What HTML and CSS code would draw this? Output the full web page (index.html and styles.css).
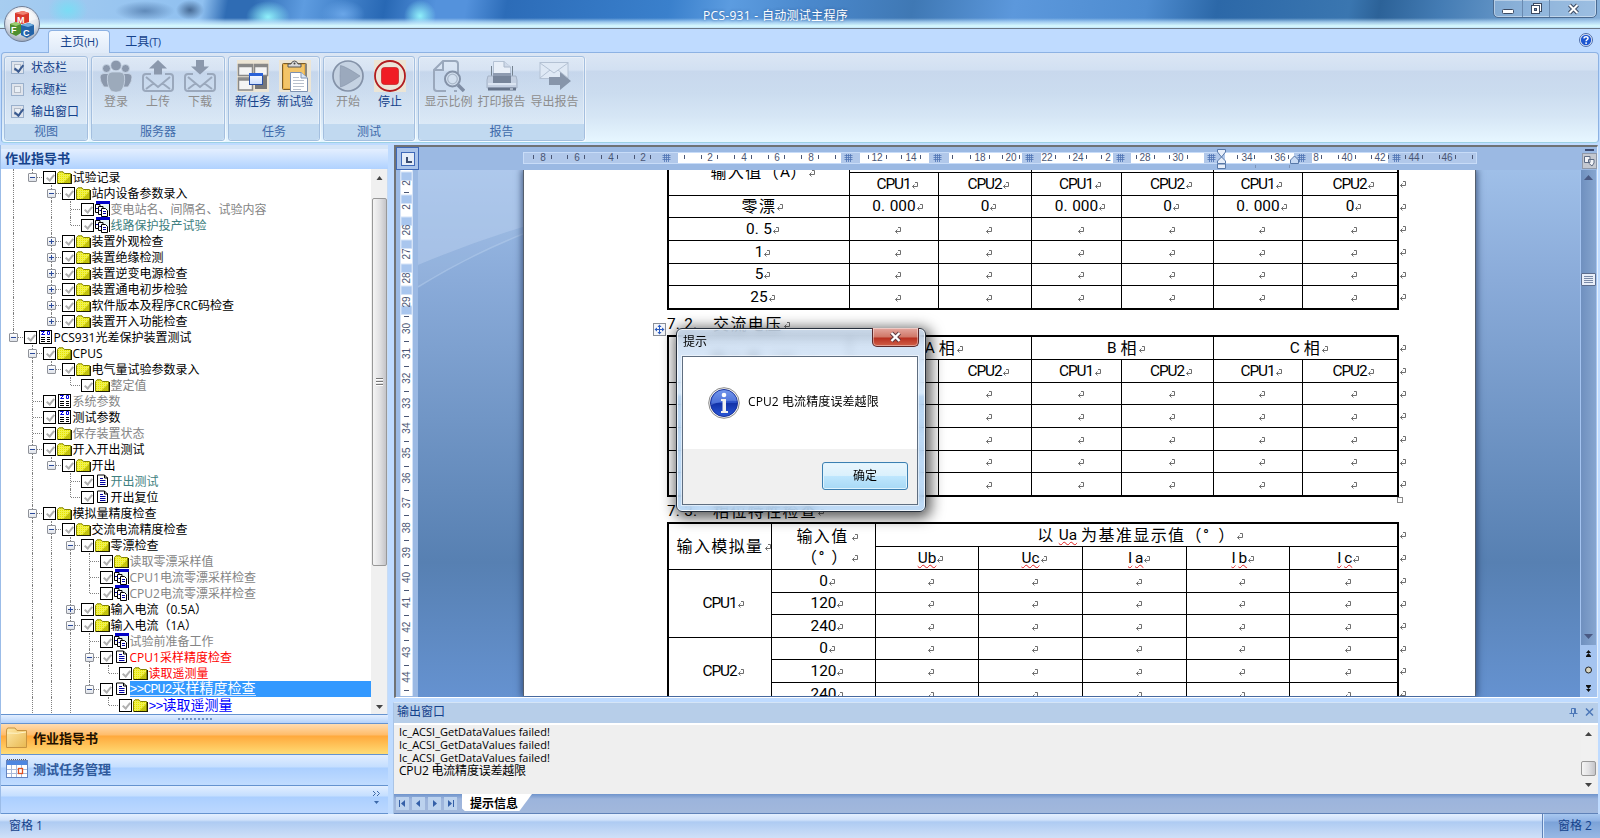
FILE: index.html
```html
<!DOCTYPE html>
<html lang="zh-CN">
<head>
<meta charset="utf-8">
<title>PCS-931 - 自动测试主程序</title>
<link rel="stylesheet" href="styles.css">
</head>
<body>
<svg class="defs" width="0" height="0">
  <defs>
    <pattern id="dither" width="2" height="2" patternUnits="userSpaceOnUse"><rect width="2" height="2" fill="#ffff30"/><rect width="1" height="1" fill="#e0e070"/><rect x="1" y="1" width="1" height="1" fill="#d8d818"/></pattern>
    <linearGradient id="gInfo" x1="0" y1="0" x2="0" y2="1"><stop offset="0" stop-color="#6a8fe8"/><stop offset=".48" stop-color="#2a50c8"/><stop offset=".52" stop-color="#1232a8"/><stop offset="1" stop-color="#2a58d8"/></linearGradient>
    <linearGradient id="gPaper" x1="0" y1="0" x2="1" y2="1"><stop offset="0" stop-color="#ffe9a8"/><stop offset="1" stop-color="#e8b850"/></linearGradient>
    <radialGradient id="gOrb" cx=".5" cy=".3" r=".75"><stop offset="0" stop-color="#fff"/><stop offset=".6" stop-color="#dfe3ea"/><stop offset="1" stop-color="#8f9bb0"/></radialGradient>
    <linearGradient id="gWin" x1="0" y1="0" x2="0" y2="1"><stop offset="0" stop-color="#fff"/><stop offset="1" stop-color="#c8dcff"/></linearGradient>
  </defs>
  <symbol id="ret" viewBox="0 0 8 8"><path d="M4 .5H6.5V4.5H1.5M3.5 2.5L1.5 4.5L3.5 6.5" fill="none" stroke="#6e6e6e"/></symbol>
  <symbol id="folder" viewBox="0 0 15 13"><path d="M.5 12.5V2.5L2 .8H6L7.5 2.5H13.5V12.5Z" fill="url(#dither)" stroke="#848400"/><path d="M6 12L13 5V12Z" fill="#b4b400" opacity=".75"/><path d="M14.5 3V13M1 12.5H15" stroke="#202000" fill="none"/></symbol>
  <symbol id="page" viewBox="0 0 13 14"><path d="M1.5 1H8.5L11.5 4V12.5H1.5Z" fill="#fff" stroke="#000"/><path d="M8.500 1V4H12" fill="none" stroke="#000"/><path d="M4 4.500H7M4 6.500H9.500M4 8.500H9.500M4 10.500H9.500" stroke="#0000a0"/></symbol>
  <symbol id="zd" viewBox="0 0 13 14"><rect x=".5" y=".5" width="12" height="13" fill="#fff" stroke="#000"/><path d="M2 1.500H5.500L2.500 4.500H6M8.500 1.500H10.500V4.500H8.500Z" fill="none" stroke="#0000e0"/><path d="M2 7.500H6M8 7.500H11M2 9.500H6M8 9.500H11M2 11.500H6M8 11.500H11" stroke="#000"/></symbol>
  <symbol id="multi" viewBox="0 0 16 16"><rect x="2" y="0" width="14" height="3" fill="#0000c8"/><path d="M15.500 3V15" stroke="#000"/><rect x="3" y="3" width="12" height="8" fill="#e8f4f4"/><path d="M1.500 3.500H6V11.500H1.500Z" fill="#fff" stroke="#000"/><path d="M4.500 5.500H9V13.500H4.500Z" fill="#fff" stroke="#000"/><path d="M7.500 7.500H11.500L13.500 9.500V15.500H7.500Z" fill="#fff" stroke="#000"/><path d="M9 10.500H12M9 12.500H12M2 7.500H4M5.500 9.500H7" stroke="#0000a0"/></symbol>
</svg>

<header class="titlebar">
  <span class="title">PCS-931 - 自动测试主程序</span>
  <div class="winctl">
    <span class="wc wc-min"><svg width="12" height="6"><rect x=".5" y=".5" width="11" height="4" rx="1" fill="#fff" stroke="#3c4a62"/></svg></span>
    <span class="wc wc-max"><svg width="13" height="13"><rect x="3.500" y="1.500" width="8" height="8" fill="#fff" stroke="#3c4a62"/><rect x="1.500" y="3.500" width="8" height="8" fill="#fff" stroke="#3c4a62"/><rect x="4.500" y="6.500" width="2" height="2" fill="#6c93c4" stroke="#3c4a62"/></svg></span>
    <span class="wc wc-close"><svg width="13" height="12"><path d="M2.500 2L10.500 10M10.500 2L2.500 10" stroke="#3c4a62" stroke-width="4"/><path d="M2.500 2L10.500 10M10.500 2L2.500 10" stroke="#fff" stroke-width="2"/></svg></span>
  </div>
</header>

<nav class="tabs">
  <span class="tab tab-on">主页<i>(H)</i></span>
  <span class="tab">工具<i>(T)</i></span>
  <svg class="help" width="14" height="14" viewBox="0 0 14 14"><circle cx="7" cy="7" r="6.500" fill="#e8eefa" stroke="#4c6ca8"/><circle cx="7" cy="7" r="5.200" fill="#1c56d0"/><path d="M5 5.500C5 3 9.200 3.200 9 5.500C8.900 6.800 7.100 6.800 7.100 8.300" stroke="#fff" stroke-width="1.500" fill="none"/><rect x="6.300" y="9.300" width="1.600" height="1.600" fill="#fff"/></svg>
</nav>

<svg class="orb" width="38" height="38" viewBox="0 0 38 38">
  <circle cx="19" cy="19" r="17.500" fill="url(#gOrb)" stroke="#6f7f98"/>
  <path d="M4 14A16 16 0 0 1 34 14Q19 20 4 14Z" fill="#fff" opacity=".5"/>
  <path d="M12 8L20 6L26 8V17L19 19L12 17Z" fill="#d8382c"/><path d="M12 8L20 6L26 8L20 10Z" fill="#f08070"/>
  <path d="M7 19L13 17L18 19V28L13 31L7 28Z" fill="#4f8f30"/><path d="M7 19L13 17L18 19L13 21Z" fill="#9ccc70"/>
  <path d="M18 20L26 18L31 20V29L24 33L18 30Z" fill="#2464a8"/><path d="M18 20L26 18L31 20L25 22Z" fill="#74b0e0"/>
  <text x="14" y="18" class="cube">M</text><text x="8" y="28" class="cube">F</text><text x="20" y="31" class="cube">C</text>
</svg>

<section class="ribbon">
  <div class="group g-view">
    <div class="checks">
      <label><b class="cb on"></b>状态栏</label>
      <label><b class="cb"></b>标题栏</label>
      <label><b class="cb on"></b>输出窗口</label>
    </div>
    <div class="gname">视图</div>
  </div>
  <div class="group g-server">
    <div class="tools">
      <div class="tool off"><svg width="32" height="32"><g fill="#8b98ac" stroke="#cbd8e8" stroke-width=".8"><circle cx="6.500" cy="8.500" r="4"/><circle cx="25.500" cy="8.500" r="4"/><path d="M0 17Q0 13.500 4 13.500H9V27H4Q0 22 0 17ZM32 17Q32 13.500 28 13.500H23V27H28Q32 22 32 17Z"/><circle cx="16" cy="5.500" r="5.300"/><path d="M7.500 16Q8 12 12 12H20Q24 12 24.500 16Q25.500 25 21 31Q16 33.500 11 31Q6.500 25 7.500 16Z" fill="#9caabb"/></g></svg><span>登录</span></div>
      <div class="tool off"><svg width="32" height="32"><path d="M9 14H4Q1 14 1 17V28Q1 31 4 31H28Q31 31 31 28V17Q31 14 28 14H23M4 17L16 27L28 17M4 29L12 23M28 29L20 23" fill="none" stroke="#9aa8bc" stroke-width="2"/><path d="M16 0L25 8.500H20V14.500H12V8.500H7Z" fill="#8b98ac"/></svg><span>上传</span></div>
      <div class="tool off"><svg width="32" height="32"><path d="M9 14H4Q1 14 1 17V28Q1 31 4 31H28Q31 31 31 28V17Q31 14 28 14H23M4 17L16 27L28 17M4 29L12 23M28 29L20 23" fill="none" stroke="#9aa8bc" stroke-width="2"/><path d="M16 14.500L25 6.500H20V0H12V6.500H7Z" fill="#8b98ac"/></svg><span>下载</span></div>
    </div>
    <div class="gname">服务器</div>
  </div>
  <div class="group g-task">
    <div class="tools">
      <div class="tool"><svg width="32" height="32"><rect width="32" height="32" fill="#ece5d5"/><g fill="#f4f4f4" stroke="#888" stroke-width="1.500"><rect x="1.500" y="4.500" width="14" height="11"/><rect x="17.500" y="4.500" width="13" height="11"/><rect x="1.500" y="18" width="14" height="12"/></g><path d="M2 6H15M18 6H30M2 19.500H15" stroke="#888" stroke-width="2.500"/><path d="M28 16V27H18" stroke="#777" stroke-width="4" fill="none"/><rect x="12.500" y="13.500" width="13" height="11" fill="url(#gWin)" stroke="#2850a8"/><rect x="12" y="13" width="14" height="3" fill="#2a62d8"/></svg><span>新任务</span></div>
      <div class="tool"><svg width="32" height="32"><rect width="32" height="32" fill="#ece5d5"/><rect x="3.500" y="3.500" width="24" height="26" rx="1" fill="#e8b04a" stroke="#7a5c28"/><rect x="5" y="5" width="20" height="23" fill="#f3c468"/><path d="M27 4V30" stroke="#8a857a" stroke-width="2"/><path d="M9 7V4H12Q13 1 15.500 1Q18 1 19 4H22V7Z" fill="#d8d8d8" stroke="#555"/><circle cx="15.500" cy="3.500" r="1" fill="#444"/><path d="M11.500 12.500H22L28.500 18V31.500H11.500Z" fill="#fff" stroke="#7c90b0"/><path d="M22 12.500V18H28.500" fill="#dce6f4" stroke="#7c90b0"/><path d="M14 17.500H20M14 20.500H25M14 23.500H25M14 26.500H25M14 29.500H22" stroke="#b8c0cc"/></svg><span>新试验</span></div>
    </div>
    <div class="gname">任务</div>
  </div>
  <div class="group g-test">
    <div class="tools">
      <div class="tool off"><svg width="32" height="32"><circle cx="16" cy="16" r="15" fill="#c5d2e2" stroke="#8492a8" stroke-width="1.700"/><path d="M8.500 5.500Q14 6.500 28 16Q14 25.500 8.500 27Q7.500 16 8.500 5.500Z" fill="#9ba9bd" stroke="#8492a8" stroke-width=".6"/></svg><span>开始</span></div>
      <div class="tool"><svg width="32" height="32"><rect width="32" height="32" fill="#ece5d5"/><circle cx="16" cy="16" r="15" fill="#ece4d8" stroke="#b01c20" stroke-width="1.800"/><rect x="7.500" y="7.500" width="17" height="17" rx="3" fill="#f01c24" stroke="#c01c20" stroke-width=".7"/></svg><span>停止</span></div>
    </div>
    <div class="gname">测试</div>
  </div>
  <div class="group g-report">
    <div class="tools">
      <div class="tool off"><svg width="32" height="32"><path d="M10 1H22Q25 1 25 4V13M13 31H4Q1 31 1 28V10L10 1V10H1" fill="none" stroke="#9aa8bc" stroke-width="2"/><path d="M24 31H21" stroke="#9aa8bc" stroke-width="2"/><circle cx="19.500" cy="19" r="7.500" fill="#d3e0f0" stroke="#8492a8" stroke-width="2"/><circle cx="19.500" cy="19" r="4.800" fill="none" stroke="#aab8ca" stroke-width="1.300"/><path d="M25 25L31 31" stroke="#7f8da4" stroke-width="3.500"/></svg><span>显示比例</span></div>
      <div class="tool off"><svg width="32" height="32"><path d="M7.500 17V1.500H18L24.500 7V17Z" fill="#e8eff8" stroke="#b4c2d4"/><path d="M18 1.500V7H24.500" fill="#cfdaea" stroke="#aab8ca"/><path d="M5.500 6V17M26.500 6V17" stroke="#74828f"/><path d="M2 16H30L31 20V28H1V20Z" fill="#c4d0e2" stroke="#a4b2c6"/><path d="M7 13H25V24H7Z" fill="#77859a"/><path d="M7 13H25V16H7Z" fill="#8e9bb0"/><rect x="2" y="23" width="28" height="2" fill="#dbe5f2"/><rect x="2" y="27.500" width="28" height="3" fill="#66748a"/><rect x="24" y="28" width="3" height="2" fill="#a8b4c6"/></svg><span>打印报告</span></div>
      <div class="tool off"><svg width="32" height="32"><rect x="1" y="2.500" width="28" height="16" fill="#dfe9f5" stroke="#b4c2d4"/><path d="M1 3L15 13L29 3M1 18L11 10M29 18L19 10" fill="none" stroke="#b4c2d4"/><path d="M10 17H21V12L32 21L21 30V25H10Z" fill="#8795aa"/></svg><span>导出报告</span></div>
    </div>
    <div class="gname">报告</div>
  </div>
</section>

<main class="work">
  <aside class="side">
    <div class="side-head">作业指导书</div>
    <div class="tree-wrap">
      <div class="tree" id="tree"></div>
      <div class="sb">
        <svg width="15" height="29"><path d="M4.500 11L7.500 7L10.500 11Z" fill="#444"/></svg>
        <div class="sb-thumb tree-thumb"><i></i><i></i><i></i></div>
        <svg class="sb-end" width="15" height="15"><path d="M4 6H11L7.500 10Z" fill="#444"/></svg>
      </div>
    </div>
    <div class="splitter"><i></i><i></i><i></i><i></i><i></i><i></i><i></i><i></i><i></i></div>
    <div class="navbtn active"><svg width="22" height="22"><path d="M.500 4V20.500H20.500V3.500H11L9 1H2Q.500 1 .500 4Z" fill="url(#gPaper)" stroke="#c89440"/><path d="M1 6Q12 7 20 5" stroke="#fff4c8" fill="none"/></svg><span>作业指导书</span></div>
    <div class="navbtn"><svg width="22" height="22"><rect x=".500" y="2.500" width="21" height="17" fill="#fff" stroke="#6484c0"/><rect x="1" y="3" width="20" height="4" fill="#4e86e0"/><path d="M1 1.500H21" stroke="#555" stroke-dasharray="1 1"/><path d="M5.500 7V19M10.500 7V19M15.500 7V19M1 11.500H21M1 15.500H21" stroke="#a8b8d8"/><rect x="12.500" y="10.500" width="4" height="5" fill="#fff" stroke="#e05020" stroke-width="1.300"/></svg><span>测试任务管理</span></div>
    <div class="navrest"><svg width="9" height="18"><path d="M1 2L3.500 4.500L1 7M5 2L7.500 4.500L5 7" fill="none" stroke="#3c68a8"/><path d="M2 12H7L4.500 15Z" fill="#3c68a8"/></svg></div>
  </aside>

  <section class="right">
    <div class="doc">
      <div class="ruler-row">
        <span class="corner"><svg width="14" height="14"><rect x=".500" y=".500" width="13" height="13" fill="#e4ecf8" stroke="#3f69b8"/><path d="M6 5V10H11" stroke="#3a4c70" stroke-width="2" fill="none"/></svg></span>
        <svg id="hruler" width="1160" height="22"></svg>
        <span class="viewbtn"><i></i><svg width="15" height="16"><rect x=".500" y=".500" width="14" height="15" fill="#c4c8d0" stroke="#8f98a8"/><path d="M2.500 3.500H8V9.500H2.500ZM6.500 6.500H12V10L10 13L6.500 10Z" fill="#f2f4f8" stroke="#5f6c84"/></svg></span>
      </div>
      <div class="doc-row">
        <svg id="vruler" width="22" height="526"></svg>
        <div class="desk">
          <svg class="arc" width="105" height="130"><path d="M0 0H105V57Q50 74 0 95Z" fill="#b9d0ee" opacity=".55"/><path d="M0 95Q50 74 105 57V64Q50 86 0 117Z" fill="#b9d0ee" opacity=".15"/><path d="M0 117Q50 86 105 64" stroke="#b8cfee" fill="none" stroke-width="1.500" opacity=".5"/></svg>
          <div class="page">
            <div class="tblrow t1"><div class="grid g1" id="t1"></div><div class="marks" id="m1"></div></div>
            <h2 class="hd"><em class="en">7<i class="dot">.</i>2<i class="dot">.</i></em><span>交流电压</span><svg class="ret"><use href="#ret"/></svg></h2>
            <div class="tblrow"><div class="grid g2" id="t2"></div><div class="marks" id="m2"></div></div>
            <h2 class="hd"><em class="en">7<i class="dot">.</i>3<i class="dot">.</i></em><span>相位特性检查</span><svg class="ret"><use href="#ret"/></svg></h2>
            <div class="tblrow"><div class="grid g3" id="t3"></div><div class="marks" id="m3"></div></div>
            <svg class="mover" width="13" height="13"><rect x=".500" y=".500" width="12" height="12" fill="#f4f6fa" stroke="#8a8f98"/><path d="M6.500 2.500V10.500M2.500 6.500H10.500" stroke="#2c5cc0"/><path d="M6.500 1.500L4.500 4H8.500ZM6.500 11.500L4.500 9H8.500ZM1.500 6.500L4 4.500V8.500ZM11.500 6.500L9 4.500V8.500Z" fill="#2c5cc0"/></svg>
            <i class="sizer"></i>
          </div>
        </div>
        <div class="wsb">
          <div class="wtrack">
            <svg width="15" height="16"><path d="M3 10H12L7.500 5Z" fill="#4a5a84"/></svg>
            <div class="wthumb"><i></i><i></i><i></i><i></i></div>
            <svg class="sb-end" width="15" height="16"><path d="M3 5H12L7.500 10Z" fill="#4a5a84"/></svg>
          </div>
          <svg width="16" height="51"><g fill="#111"><path d="M5 8L7.500 5L10 8ZM5 11L7.500 8L10 11ZM5 41L7.500 44L10 41ZM5 44L7.500 47L10 44Z"/><path d="M5 11H10V12H5ZM5 40H10V41H5Z"/></g><circle cx="7.500" cy="25" r="3" fill="#d8d4c0" stroke="#222"/></svg>
        </div>
      </div>
    </div>

    <div class="output">
      <div class="out-head"><span>输出窗口</span>
        <svg width="25" height="10"><path d="M2.500 6V1.500H6.500V6M.500 6.500H8.500M4.500 7V10M5.500 1V6" stroke="#4d78b8" fill="none"/><path d="M17 1.500L24 8.500M24 1.500L17 8.500" stroke="#4d78b8" stroke-width="1.500"/></svg>
      </div>
      <div class="out-body">
        <div class="log"><p>Ic_ACSI_GetDataValues failed!</p><p>Ic_ACSI_GetDataValues failed!</p><p>Ic_ACSI_GetDataValues failed!</p><p class="cn">CPU2 电流精度误差越限</p></div>
        <div class="sb osb">
          <svg width="15" height="36"><path d="M4 11L7.500 7L11 11Z" fill="#444"/></svg>
          <div class="sb-thumb othumb"></div>
          <svg class="sb-end" width="15" height="16"><path d="M4 5H11L7.500 9Z" fill="#444"/></svg>
        </div>
      </div>
      <div class="out-tabs">
        <b><svg width="13" height="13"><path d="M3.500 3V10" stroke="#3560a8"/><path d="M9 3V10L5 6.500Z" fill="#3560a8"/></svg></b>
        <b><svg width="13" height="13"><path d="M8 3V10L4 6.500Z" fill="#3560a8"/></svg></b>
        <b><svg width="13" height="13"><path d="M5 3V10L9 6.500Z" fill="#3560a8"/></svg></b>
        <b><svg width="13" height="13"><path d="M9.500 3V10" stroke="#3560a8"/><path d="M4 3V10L8 6.500Z" fill="#3560a8"/></svg></b>
        <span class="otab">提示信息</span>
      </div>
    </div>
  </section>
</main>

<footer class="status"><span class="st-left">窗格 1</span><span class="st-right">窗格 2</span></footer>

<div class="dialog">
  <div class="dlg-title"><span>提示</span><span class="dlg-x"><svg width="13" height="12"><path d="M2.500 2L10.500 10M10.500 2L2.500 10" stroke="#5c3a40" stroke-width="4.200"/><path d="M2.500 2L10.500 10M10.500 2L2.500 10" stroke="#fff" stroke-width="2.400"/></svg></span></div>
  <div class="dlg-body">
    <div class="dlg-msg">
      <svg width="32" height="32"><circle cx="16" cy="16" r="15.300" fill="#f4f4f4" stroke="#8c8c8c"/><circle cx="16" cy="16" r="13.500" fill="url(#gInfo)" stroke="#16309a"/><path d="M3 18Q4 4 16 3Q27 4 29 14Q16 13 3 18Z" fill="#7ea0f0" opacity=".45"/><circle cx="16" cy="8" r="2.300" fill="#fff"/><path d="M13 12H18V24H20V26H13V24H14.500V14H13Z" fill="#f0f0f0"/></svg>
      <span>CPU2 电流精度误差越限</span>
    </div>
    <div class="dlg-foot"><button class="ok">确定</button></div>
  </div>
</div>
<script src="app.js"></script>
</body>
</html>
```
FILE: styles.css
```css
* { box-sizing: border-box; }
html, body { margin: 0; padding: 0; }
body { width: 1600px; height: 838px; overflow: hidden; display: flex; flex-direction: column; background: #bfdbff; font: 12px/16px "Open Sans", "Noto Sans CJK SC", sans-serif; color: #000; position: relative; }
svg { display: block; flex: none; }
i, em { font-style: normal; }
p, h2 { margin: 0; }
.defs { position: absolute; }

/* title bar */
.titlebar { height: 29px; flex: none; position: relative; border-bottom: 1px solid #6b7887; display: flex; justify-content: center;
  background:
    linear-gradient(to bottom, transparent 18px, rgba(190,225,250,.75) 22px, #d8fbff 26px, #c4e4fa 28px),
    radial-gradient(ellipse 22px 16px at 268px 17px, #8ff0fa, transparent),
    radial-gradient(ellipse 22px 14px at 343px 14px, #6aa6e8, transparent),
    radial-gradient(ellipse 16px 16px at 420px 16px, #8ff0fa, transparent),
    radial-gradient(ellipse 14px 10px at 190px 10px, rgba(40,70,110,.7), transparent),
    radial-gradient(ellipse 30px 10px at 145px 11px, rgba(60,100,150,.6), transparent),
    radial-gradient(ellipse 20px 16px at 68px 10px, #7adcf4, transparent),
    linear-gradient(100deg, #a7cdf0 0, #8fc0f0 200px, #2f6cb4 225px, #2f6cb4 250px, #5e9ce0 300px, #2868b4 380px, #5492dc 430px, #5492dc 460px, #2c6cb8 500px, #3a80cc 660px, #5c9ce0 720px, #4a88cc 800px, #3f78b4 900px, #5c98dc 1000px, #4e8cd0 1130px, #2c68a8 1200px, #3a76b0 1330px, #2c6298 1360px, #447cb4 1420px, #74a2d0 1520px, #8cb4dc 1600px); }
.title { width: 148px; margin-left: -46px; color: #fff; padding-top: 8px; line-height: 16px; letter-spacing: .3px; white-space: nowrap; text-shadow: 0 0 3px rgba(20,60,120,.6); }
.winctl { position: absolute; right: 3px; top: -1px; display: flex; height: 19px; border: 1px solid #4a6a90; border-radius: 0 0 5px 5px; background: rgba(200,222,244,.35); box-shadow: inset 0 0 0 1px rgba(255,255,255,.4); }
.wc { display: flex; align-items: center; justify-content: center; border-left: 1px solid #6a8ab0; }
.wc-min { width: 28px; border-left: 0; padding-top: 6px; }
.wc-max { width: 27px; }
.wc-close { width: 47px; }

/* ribbon tabs */
.tabs { height: 23px; flex: none; display: flex; align-items: flex-end; padding-left: 48px; position: relative; color: #15428b; }
.tab { width: 62px; height: 22px; line-height: 23px; text-align: center; }
.tab + .tab { width: 66px; }
.tab i { font-size: 11px; letter-spacing: -.3px; }
.tab-on { background: linear-gradient(#f4f9ff, #dfeaf8); border: 1px solid #8db2e3; border-bottom: 0; border-radius: 4px 4px 0 0; height: 23px; line-height: 22px; position: relative; z-index: 2; margin-bottom: -1px; }
.help { margin-left: auto; margin-right: 7px; margin-bottom: 5px; }
.orb { position: absolute; left: 3px; top: 5px; z-index: 5; }
.cube { font: bold 9px "Liberation Sans", sans-serif; fill: #fff; }

/* ribbon */
.ribbon { height: 91px; flex: none; margin: 0 1px 2px; border: 1px solid #8db2e3; border-bottom-color: #9bd0e4; border-radius: 4px; padding: 3px 2px; display: flex; gap: 3px; background: linear-gradient(#dbe6f4 0, #d2e0f2 17px, #c8d8ed 18px, #cbdcef 40px, #d6e6f5 64px, #e6f6ff 88px); }
.group { height: 85px; border: 1px solid #a4bfdf; border-radius: 3px; display: flex; flex-direction: column; justify-content: space-between; box-shadow: inset 0 0 0 1px rgba(255,255,255,.35), 1px 1px 0 rgba(255,255,255,.6); background: linear-gradient(rgba(255,255,255,.15) 0, rgba(255,255,255,.1) 14px, rgba(190,208,232,.25) 15px, rgba(220,232,245,.5) 67px); }
.g-view { width: 84px; } .g-server { width: 134px; } .g-task { width: 92px; } .g-test { width: 92px; } .g-report { width: 167px; }
.gname { height: 16px; line-height: 15px; text-align: center; color: #3e6aaa; background: #c1d9f0; border-radius: 0 0 3px 3px; }
.checks { padding: 3px 0 0 6px; display: flex; flex-direction: column; gap: 6px; color: #15428b; }
.checks label { display: flex; align-items: center; gap: 7px; height: 16px; }
.cb { width: 13px; height: 13px; margin-bottom: 1px; border: 1px solid #9ab0cc; background: #e9eff6; box-shadow: inset 0 0 0 2px #dfe4ec, inset 0 0 0 3px #b4bcc8; position: relative; }
.cb.on::after { content: ""; position: absolute; left: 4px; top: 1px; width: 4px; height: 7px; border: solid #3a5a90; border-width: 0 2px 2px 0; transform: rotate(38deg); }
.tools { display: flex; justify-content: center; padding-top: 3px; }
.tool { width: 42px; display: flex; flex-direction: column; align-items: center; gap: 2px; color: #15428b; white-space: nowrap; }
.g-report .tool { width: 53px; }
.tool.off { color: #8d8d8d; }

/* workspace */
.work { flex: 1; display: flex; gap: 5px; min-height: 0; }
.side { width: 388px; border-left: 1px solid #9bbce8; display: flex; flex-direction: column; }
.side-head { height: 24px; border-top: 4px solid #d5e5f7; padding-left: 4px; font-weight: bold; font-size: 13px; line-height: 19px; color: #15428b; background: linear-gradient(#e4efff, #b0d2ff); }
.tree-wrap { height: 546px; display: flex; background: #fff; border-bottom: 1px solid #6593cf; border-right: 1px solid #c8dcf4; }
.tree { width: 370px; height: 545px; overflow: hidden; }
.row { height: 16px; display: flex; align-items: center; padding-left: 3px; line-height: 16px; white-space: nowrap; }
.gd { width: 19px; height: 16px; flex: none; position: relative; }
.gd.v::before, .gd.e::before { content: ""; position: absolute; left: 9px; top: 0; height: 16px; border-left: 1px dotted #808080; }
.gd.e::before { height: 8px; }
.gd.h::after { content: ""; position: absolute; left: 10px; top: 8px; width: 9px; border-top: 1px dotted #808080; }
.pm { position: absolute; z-index: 1; left: 5px; top: 4px; width: 9px; height: 9px; border: 1px solid #8f9299; border-radius: 1px; background: linear-gradient(#fff, #dfe3ea); }
.pm::before { content: ""; position: absolute; left: 1px; top: 3px; width: 5px; height: 1px; background: #2b4a9b; }
.pm.plus::after { content: ""; position: absolute; left: 3px; top: 1px; width: 1px; height: 5px; background: #2b4a9b; }
.ck { width: 13px; height: 13px; flex: none; margin: 1px 0 0 1px; border: 1px solid #000; background: #fff; position: relative; }
.ck::after { content: ""; position: absolute; left: 4px; top: 1px; width: 3px; height: 6px; border: solid #b0b0b0; border-width: 0 2px 2px 0; transform: rotate(40deg); }
.ico { width: 17px; display: flex; justify-content: center; flex: none; }
.ico .ic-multi { margin-right: 2px; }
.tx { flex: none; padding-top: 2px; margin-left: -.500px; }
.gray { color: #848484; } .teal { color: #408080; } .red { color: #f00; }
.sel, .blue { font: 14px/16px "Liberation Mono", "Noto Sans CJK SC", monospace; }
.sel u, .blue u { font-size: 13px; letter-spacing: -.8px; text-decoration: none; }
.sel { background: #3399ff; color: #fff; flex: 1; height: 16px; padding-top: 0; }
.sel span { border-bottom: 1px solid #cfe4ff; display: inline-block; height: 15px; line-height: 16px; }
.blue { color: #00f; }
.sb { width: 16px; background: #f0f0f0; display: flex; flex-direction: column; align-items: center; }
.sb-thumb { width: 15px; border: 1px solid #989898; border-radius: 2px; background: linear-gradient(90deg, #f5f5f5, #e2e2e4 50%, #c4c4c8); display: flex; flex-direction: column; align-items: center; justify-content: center; gap: 1px; }
.sb-thumb i { width: 7px; height: 2px; background: #777; border-bottom: 1px solid #fff; }
.tree-thumb { height: 368px; }
.sb-end { margin-top: auto; }
.splitter { height: 8px; display: flex; align-items: center; justify-content: center; gap: 2px; background: linear-gradient(#e4efff, #b4d2fa); }
.splitter i { width: 2px; height: 2px; background: #6f93c8; }
.navbtn { height: 31px; border-top: 1px solid #6593cf; padding-left: 5px; display: flex; align-items: center; gap: 5px; font-weight: bold; font-size: 13px; color: #2f5a9c; background: linear-gradient(#e2eeff, #c4deff 12px, #abcfff 13px, #c1dcff); }
.navbtn svg { margin-bottom: 2px; }
.navbtn span { padding-bottom: 3px; }
.navbtn.active { color: #201000; background: linear-gradient(#ffdcb0, #ffbc69 11px, #ffa93c 12px, #ffdc75); }
.navrest { flex: 1; border-top: 1px solid #6593cf; border-bottom: 1px solid #6593cf; display: flex; justify-content: flex-end; padding: 3px 7px 0 0; background: linear-gradient(#e2eeff, #c4deff 10px, #abcfff 11px, #bcd8ff); }

.right { flex: 1; display: flex; flex-direction: column; min-width: 0; padding-left: 1px; }
.doc { height: 553px; flex: none; border: 2px solid #6f7275; border-width: 2px 1px 0 2px; border-right-color: #e4eefa; border-bottom: 1px solid #fff; display: flex; flex-direction: column; background: #9bb9e3; width: 1204px; }
.ruler-row { height: 23px; flex: none; display: flex; }
.corner { width: 23px; height: 23px; border: 1px solid #3f69b8; display: flex; align-items: center; justify-content: center; background: #a9c3ea; }
.viewbtn { margin-left: auto; margin-right: 0; padding-top: 2px; display: flex; flex-direction: column; align-items: center; gap: 2px; }
.viewbtn i { width: 9px; height: 2px; background: #3c4a70; }
.doc-row { flex: 1; display: flex; min-height: 0; }
.rt { font: 10px "Liberation Sans", sans-serif; fill: #4a5674; text-anchor: middle; }
.desk { flex: 1; overflow: hidden; position: relative; padding-left: 105px; background: linear-gradient(#9fbfe8 0, #8aabd9 110px, #5780b2 392px, #6592d0 526px); }
.arc { position: absolute; left: 0; top: 0; }
.page { width: 953px; height: 526px; overflow: hidden; position: relative; background: #fff; border: 1px solid #56606e; border-width: 0 1px; padding-left: 143px; box-shadow: 0 0 7px 1px rgba(30,50,90,.75); font: 16px/21px Roboto, "Noto Sans CJK SC", sans-serif; }
.tblrow { display: flex; }
.t1 { margin-top: -23px; }
.grid { width: 732px; flex: none; border: 2px solid #000; display: grid; gap: 1px; background: #000; }
.g1, .g2 { grid-template-columns: 180px 88px 92px 89px 91px 88px 94px; }
.g1 { grid-template-rows: 23px 22px 21px 22px 22px 21px 22px; }
.g2 { grid-template-rows: 22px 22px 21px 22px 22px 21px 22px; }
.g3 { grid-template-columns: 102px 103px 102px 103px 103px 102px 107px; grid-template-rows: 22px 22px 22px 21px 22px 21px 22px 22px; border-bottom: 0; }
.cell { background: #fff; display: flex; align-items: center; justify-content: center; text-align: center; white-space: nowrap; padding: 1px 0 0 8px; }
.cell b, .en { font: 15.400px/18px Roboto, "Liberation Sans", sans-serif; margin-bottom: 2px; }
.cell b.word { letter-spacing: -1.100px; margin-right: 1px; }
.dot { letter-spacing: 4.600px; }
.nar { padding: 0 2.800px 0 2.500px; }
.cell s, .hd span { text-decoration: none; letter-spacing: 1.400px; line-height: 20px; }
.cell .sq { text-decoration: underline wavy #e02020 1px; text-underline-offset: 1px; text-decoration-skip-ink: none; }
.ret { width: 8px; height: 8px; display: inline-block; margin-top: 2px; flex: none; }
.cell .two { display: flex; flex-direction: column; align-items: flex-end; line-height: 21px; }
.cell .two div { display: flex; align-items: center; gap: 2px; height: 21px; }
.sp { width: 4px; flex: none; }
.deg { width: 8px; flex: none; }
.marks { display: flex; flex-direction: column; padding-top: 2px; gap: 1px; }
.marks div { display: flex; align-items: center; }
.hd { height: 25px; display: flex; align-items: center; font: inherit; padding-top: 5px; }
.hd em { width: 46px; }
.mover { position: absolute; left: 129px; top: 153px; }
.sizer { position: absolute; left: 873px; top: 327px; width: 6px; height: 6px; border: 1px solid #888; background: #fff; }
.wsb { width: 17px; background: #a5c4f0; display: flex; flex-direction: column; align-items: center; }
.wtrack { width: 15px; height: 475px; background: linear-gradient(90deg, #6f90bf, #86a5cf); display: flex; flex-direction: column; }
.wthumb { margin-top: 87px; height: 13px; border: 1px solid #5c6c8c; border-radius: 1px; background: #e8eef8; display: flex; flex-direction: column; align-items: center; justify-content: center; gap: 1px; }
.wthumb i { width: 9px; height: 1px; background: #7a8aa8; }

/* output window */
.output { margin-top: 4px; flex: 1; display: flex; flex-direction: column; width: 1205px; margin-left: -1px; border-left: 1px solid #a9c4e6; border-top: 1px solid #d5e5f7; }
.out-head { height: 20px; background: #b7cee9; color: #15428b; padding: 0 4px 2px 3px; display: flex; align-items: center; justify-content: space-between; }
.out-body { height: 71px; border-top: 2px solid #fff; background: #efefef; display: flex; justify-content: space-between; padding-right: 2px; }
.log { padding: 0 0 0 5px; }
.log p { height: 13px; line-height: 13px; font-size: 11px; white-space: nowrap; }
.log .cn { font-size: 12px; letter-spacing: -.200px; line-height: 13px; }
.osb { width: 15px; }
.othumb { height: 15px; flex: none; }
.out-tabs { flex: 1; display: flex; padding: 3px 0 0 2px; gap: 3px; background: linear-gradient(#6f94cc, #9cb4dc 5px, #a2b8dc); border-bottom: 1px solid #5f82b8; }
.out-tabs b { width: 13px; height: 13px; background: #bcd2ee; }
.otab { margin: -3px 0 0 2px; width: 70px; height: 17px; line-height: 19px; padding-left: 8px; font-weight: bold; background: #fff; clip-path: polygon(0 0, 100% 0, 82% 100%, 4% 100%, 0 85%); }

/* status bar */
.status { height: 24px; flex: none; display: flex; justify-content: space-between; color: #15428b; line-height: 24px; background: linear-gradient(#e4f0ff 0, #cfe1fa 6px, #aecbf2 8px, #cfe0f8 24px); }
.st-left { padding-left: 9px; }
.st-right { width: 58px; padding-left: 15px; border-left: 1px solid #5f82b8; background: linear-gradient(#a8c8f0, #8fb2e4 7px, #7ba2d8 8px, #98b8e4); box-shadow: inset 1px 0 0 #d8e8fc; }

/* message box */
.dialog { position: absolute; left: 676px; top: 328px; width: 250px; height: 184px; border: 1px solid #27303c; border-radius: 6px; padding: 0 7px 6px 5px; box-shadow: inset 0 0 0 1px rgba(255,255,255,.75), 2px 3px 14px 3px rgba(0,0,0,.65); background: linear-gradient(rgba(185,205,228,.72), rgba(208,228,250,.8) 34px, rgba(205,228,250,.8) 64px, rgba(168,204,240,.78) 68px, rgba(176,210,244,.82)); backdrop-filter: blur(4px); }
.dlg-title { height: 27px; display: flex; justify-content: space-between; padding-left: 1px; line-height: 26px; }
.dlg-x { width: 47px; height: 19px; margin: -1px -1px 0 0; border: 1px solid #5b2a2c; border-top: 0; border-radius: 0 0 5px 5px; background: linear-gradient(#e4a8a0, #d07868 9px, #b83020 10px, #d06048); display: flex; align-items: center; justify-content: center; box-shadow: inset 0 0 0 1px rgba(255,255,255,.4); }
.dlg-body { height: 149px; border: 1px solid #5f6e80; background: #f0f0f0; outline: 1px solid rgba(255,255,255,.5); }
.dlg-msg { height: 92px; background: #fff; display: flex; align-items: center; gap: 8px; padding-left: 25px; }
.dlg-msg span { margin-top: -3px; letter-spacing: .1px; }
.dlg-foot { display: flex; justify-content: flex-end; padding: 13px 9px 0 0; }
.ok { width: 86px; height: 28px; border: 1px solid #3c7fb1; border-radius: 3px; padding: 0; font: inherit; color: #000; background: linear-gradient(#eaf6fd, #d9f0fc 50%, #bee6fd 51%, #a7d9f5); box-shadow: inset 0 0 0 1px #dff4fe; }
```
FILE: app.js
```js
// [level, state, icon, text, colour class]; state: '-' open, '+' closed, '' leaf
const rows = [
  [1, '-', 'folder', '试验记录'],
  [2, '-', 'folder', '站内设备参数录入'],
  [3, '', 'multi', '变电站名、间隔名、试验内容', 'gray'],
  [3, '', 'multi', '线路保护投产试验', 'teal'],
  [2, '+', 'folder', '装置外观检查'],
  [2, '+', 'folder', '装置绝缘检测'],
  [2, '+', 'folder', '装置逆变电源检查'],
  [2, '+', 'folder', '装置通电初步检验'],
  [2, '+', 'folder', '软件版本及程序CRC码检查'],
  [2, '+', 'folder', '装置开入功能检查'],
  [0, '-', 'zd', 'PCS931光差保护装置测试'],
  [1, '-', 'folder', 'CPUS'],
  [2, '-', 'folder', '电气量试验参数录入'],
  [3, '', 'folder', '整定值', 'gray'],
  [1, '', 'zd', '系统参数', 'gray'],
  [1, '', 'zd', '测试参数'],
  [1, '', 'folder', '保存装置状态', 'gray'],
  [1, '-', 'folder', '开入开出测试'],
  [2, '-', 'folder', '开出'],
  [3, '', 'page', '开出测试', 'teal'],
  [3, '', 'page', '开出复位'],
  [1, '-', 'folder', '模拟量精度检查'],
  [2, '-', 'folder', '交流电流精度检查'],
  [3, '-', 'folder', '零漂检查'],
  [4, '', 'folder', '读取零漂采样值', 'gray'],
  [4, '', 'multi', 'CPU1电流零漂采样检查', 'gray'],
  [4, '', 'multi', 'CPU2电流零漂采样检查', 'gray'],
  [3, '+', 'folder', '输入电流（0.5A）'],
  [3, '-', 'folder', '输入电流（1A）'],
  [4, '', 'multi', '试验前准备工作', 'gray'],
  [4, '-', 'page', 'CPU1采样精度检查', 'red'],
  [5, '', 'folder', '读取遥测量', 'red'],
  [4, '-', 'page', '<span><u>&gt;&gt;CPU2</u>采样精度检查</span>', 'sel'],
  [5, '', 'folder', '<u>&gt;&gt;</u>读取遥测量', 'blue']
];
const iconSize = { folder: [15, 13], page: [13, 14], zd: [13, 14], multi: [16, 16] };
// levels of the branches that go on below the visible part
const levels = rows.map(r => r[0]).concat([3, 2, 1]);
const goesOn = (i, d) => {
  for (let k = i + 1; k < levels.length; k++) {
    if (levels[k] === d) return true;
    if (levels[k] < d) return false;
  }
  return false;
};
document.getElementById('tree').innerHTML = rows.map(([lv, st, ic, tx, cl], i) => {
  let g = '';
  for (let d = 0; d < lv; d++) g += `<i class="gd${goesOn(i, d) ? ' v' : ''}"></i>`;
  const pm = st ? `<i class="pm${st === '+' ? ' plus' : ''}"></i>` : '';
  g += `<i class="gd h ${goesOn(i, lv) ? 'v' : 'e'}">${pm}</i>`;
  const [w, h] = iconSize[ic];
  return `<div class="row">${g}<i class="ck"></i><i class="ico"><svg class="ic-${ic}" width="${w}" height="${h}"><use href="#${ic}"/></svg></i><span class="tx ${cl || ''}">${tx}</span></div>`;
}).join('');

// document tables
const RET = '<svg class="ret"><use href="#ret"/></svg>';
const cell = (html = '', span = '') => `<div class="cell"${span ? ` style="grid-area:${span}"` : ''}>${html}${RET}</div>`;
// half-width glyphs share one advance, so narrow ones get extra room
const half = t => t.replace('.', '<i class="dot">.</i>').replace('I', '<i class="nar">I</i>');
const en = t => `<b${/^CPU/.test(t) ? ' class="word"' : ''}>${half(t)}</b>`;
const cn = t => `<s>${t}</s>`;
const SP = '<i class="sp"></i>';
const DEG = cn('（°') + '<i class="deg"></i>' + cn('）');
const cpuRow = [1, 2, 1, 2, 1, 2].map(n => cell(en('CPU' + n))).join('');
const phases = r => ['A', 'B', 'C'].map((p, i) => cell(en(p) + SP + cn('相'), `${r} / ${2 + i * 2} / span 1 / span 2`)).join('');
const empties = n => Array(n).fill(cell()).join('');
const head = cell(cn('输入值（') + en('A') + cn('）'), '1 / 1 / span 2 / span 1') + phases(1) + cpuRow;
document.getElementById('t1').innerHTML = head +
  cell(cn('零漂')) + ['0.000', '0', '0.000', '0', '0.000', '0'].map(t => cell(en(t))).join('') +
  ['0.5', '1', '5', '25'].map(t => cell(en(t)) + empties(6)).join('');
document.getElementById('t2').innerHTML = head +
  ['0.5', '1', '10', '30', '60'].map(t => cell(en(t)) + empties(6)).join('');
const sq = t => `<b class="sq">${half(t)}</b>`;
document.getElementById('t3').innerHTML =
  cell(cn('输入模拟量'), '1 / 1 / span 2 / span 1') +
  `<div class="cell" style="grid-area:1 / 2 / span 2 / span 1"><div class="two"><div>${cn('输入值')}${RET}</div><div>${cn('（° ）')}${RET}</div></div></div>` +
  cell(cn('以') + SP + sq('Ua') + SP + cn('为基准显示值') + DEG, '1 / 3 / span 1 / span 5') +
  ['Ub', 'Uc', 'Ia', 'Ib', 'Ic'].map((t, i) => cell(sq(t), `2 / ${3 + i} / span 1 / span 1`)).join('') +
  cell(en('CPU1'), '3 / 1 / span 3 / span 1') + cell(en('CPU2'), '6 / 1 / span 3 / span 1') +
  ['0', '120', '240', '0', '120', '240'].map(t => cell(en(t)) + empties(5)).join('');
const marks = (id, hs) => {
  document.getElementById(id).innerHTML = hs.map(h => `<div style="height:${h}px">${RET}</div>`).join('');
};
marks('m1', [23, 22, 21, 22, 22, 21, 22]);
marks('m2', [22, 22, 21, 22, 22, 21, 22]);
marks('m3', [22, 22, 22, 21, 22, 21, 22, 22]);

// rulers; x values are window coordinates, shifted to the strip's origin
const H0 = 419;
let h = `<rect x="${523.5 - H0}" y="5.5" width="953" height="11" fill="#b1c8ea" stroke="#c8dcf8"/>`;
[[678, 841], [860, 929], [949, 1022], [1041, 1113], [1131, 1204], [1225, 1294], [1312, 1388]].forEach(([a, b]) => {
  h += `<rect x="${a - H0}" y="6" width="${b - a}" height="10" fill="#fff"/>`;
});
[[543, 8], [577, 6], [611, 4], [643, 2], [710, 2], [744, 4], [777, 6], [811, 8], [877, 12], [911, 14], [980, 18], [1011, 20], [1047, 22], [1078, 24], [1108, 2], [1145, 28], [1178, 30], [1247, 34], [1280, 36], [1316, 8], [1347, 40], [1380, 42], [1414, 44], [1447, 46]].forEach(([x, n]) => {
  h += `<text class="rt" x="${x - H0}" y="14">${n}</text>`;
});
[533, 551, 567, 584, 601, 617, 634, 650, 684, 701, 717, 734, 751, 768, 784, 801, 818, 835, 868, 886, 901, 920, 952, 970, 989, 1002, 1019, 1055, 1069, 1086, 1101, 1136, 1154, 1169, 1187, 1237, 1254, 1271, 1288, 1321, 1338, 1355, 1371, 1388, 1405, 1422, 1439, 1455, 1472].forEach(x => {
  h += `<path d="M${x + .5 - H0} 8V12" stroke="#4a5674"/>`;
});
[667, 849, 938, 1030, 1121, 1212, 1302, 1397].forEach(x => {
  const l = x - H0 - 2.5;
  h += `<path d="M${l} 7V15M${l + 2} 7V15M${l + 4} 7V15M${l - 2} 8.5H${l + 6}M${l - 2} 10.5H${l + 6}M${l - 2} 12.5H${l + 6}" stroke="#4f74b4" stroke-width=".8"/>`;
});
const m = 1221.5 - H0;
h += `<path d="M${m - 4} 2.5H${m + 4}V5L${m} 10L${m - 4} 5ZM${m} 10L${m + 4} 14V16.500H${m - 4}V14ZM${m - 4} 17H${m + 4}V21.500H${m - 4}Z" fill="#e6eefa" stroke="#5878a8"/>`;
h += `<path d="M${1294.5 - H0} 9L${1298.5 - H0} 13V16.500H${1290.5 - H0}V13Z" fill="#c8daf4" stroke="#5878a8"/>`;
h += `<path d="M${1255.5 - H0} 18V21M${1289.5 - H0} 18V21" stroke="#7c93b8"/>`;
document.getElementById('hruler').innerHTML = h;

const V0 = 170;
let v = '<rect x="4" y="0" width="13" height="526" fill="#d5e3f7"/><rect x="5" y="0" width="11" height="526" fill="#fff"/>';
[172, 195, 217, 240, 264, 286, 306].forEach(y => {
  v += `<rect x="5" y="${y - V0}" width="11" height="8.500" fill="#a9c6ee" stroke="#d5e3f7"/>`;
});
const label = (y, t) => { v += `<text class="rt" transform="translate(13.500 ${y - V0}) rotate(-90)" x="0" y="0">${t}</text>`; };
[[183, 2], [207, 2], [230, 26], [254, 27], [278, 28], [302, 29]].forEach(([y, t]) => label(y, t));
v += `<path d="M8 ${192.5 - V0}H13M8 ${316.5 - V0}H13" stroke="#4a5674"/>`;
for (let n = 30; n <= 44; n++) {
  const y = 328.5 + (n - 30) * 24.9;
  label(y, n);
  v += `<path d="M8 ${Math.round(y + 12.5) + .5 - V0}H13" stroke="#4a5674"/>`;
}
document.getElementById('vruler').innerHTML = v;
```
